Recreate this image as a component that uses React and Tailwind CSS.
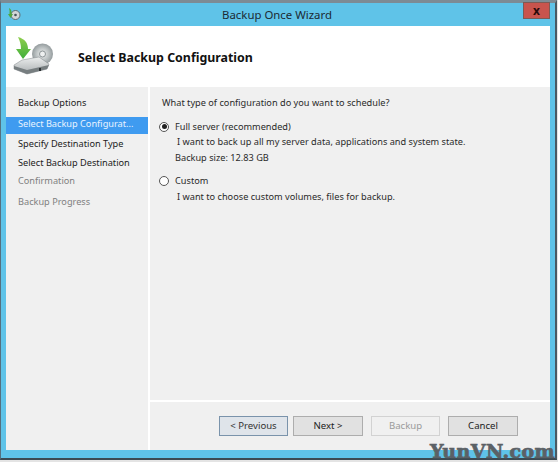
const font = "[font-family:'Noto_Sans',sans-serif]";

const steps = [
  { label: "Backup Options", cls: "h-[20px] text-[#222]" },
  { label: "Select Backup Configurat...", cls: "mt-[4px] h-[17px] pb-[4px] bg-[#3f9bf0] text-[#e8f3ff]" },
  { label: "Specify Destination Type", cls: "h-[20px] text-[#222]" },
  { label: "Select Backup Destination", cls: "h-[18px] text-[#222]" },
  { label: "Confirmation", cls: "h-[18px] text-[#808080]" },
  { label: "Backup Progress", cls: "h-[24px] text-[#808080]" },
];

function WizardIcon() {
  return (
    <svg width="40" height="40" viewBox="0 0 40 40">
      <defs>
        <radialGradient id="disc" cx="0.5" cy="0.5" r="0.5">
          <stop offset="0" stopColor="#f4f4f4" />
          <stop offset="0.6" stopColor="#bcc2c3" />
          <stop offset="1" stopColor="#959c9e" />
        </radialGradient>
        <linearGradient id="drive" x1="0" y1="0" x2="0" y2="1">
          <stop offset="0" stopColor="#eceeee" />
          <stop offset="1" stopColor="#a9aeb0" />
        </linearGradient>
        <linearGradient id="arrow" x1="0" y1="0" x2="0" y2="1">
          <stop offset="0" stopColor="#8fcf4e" />
          <stop offset="1" stopColor="#3fae3a" />
        </linearGradient>
      </defs>
      <circle cx="29.5" cy="18" r="10.5" fill="url(#disc)" />
      <circle cx="29.5" cy="18" r="3" fill="#eef0f0" stroke="#8c9496" />
      <path d="M9 24 L26 21 L36 28 L34 33 L14 38 L1 33 L1 29 Z" fill="url(#drive)" stroke="#80878a" strokeWidth="0.5" />
      <path d="M1 30 L14 34 L36 29 L34 33 L14 38 L1 33 Z" fill="#777e80" />
      <rect x="26" y="32" width="2" height="3" fill="#2c3133" />
      <path d="M5 1 C12 3 15 7 15 13 L18 13 L10 23 L3 13 L8 13 C8 9 7 5 5 1 Z" fill="url(#arrow)" />
    </svg>
  );
}

function TitleIcon() {
  return (
    <svg width="14" height="14" viewBox="0 0 14 14">
      <circle cx="8.5" cy="8" r="4.5" fill="#d3d7d8" stroke="#5d6a70" />
      <circle cx="8.5" cy="8" r="1.3" fill="#46525a" />
      <path d="M2 1 C4 2 5 4 4.5 7 L6 7 L3.5 11 L1 7 L2.5 7 C2.8 5 2.6 3 2 1 Z" fill="#4fa83d" />
    </svg>
  );
}

function Radio({ checked }) {
  return (
    <span className="flex h-[10px] w-[10px] items-center justify-center rounded-full border border-[#555] bg-white">
      {checked && <span className="h-[5px] w-[5px] rounded-full bg-[#222]" />}
    </span>
  );
}

function WizardButton({ children, cls }) {
  return (
    <button type="button" className={`h-[20px] border text-[9.6px] leading-none ${cls}`}>
      {children}
    </button>
  );
}

export default function App() {
  return (
    <div className={`relative h-[462px] w-[558px] overflow-hidden bg-[#e4e4e4] ${font}`}>
      <div className="flex h-[460px] w-[557px] flex-col border-t-[3px] border-r-2 border-b-2 border-l border-t-[#7d8b94] border-r-[#4a5a63] border-b-[#3c4a52] border-l-[#55707f] bg-[#5fc3e8]">
        <div className="relative flex h-[23px] shrink-0 items-center justify-center text-[11.4px] text-[#1c2a33]">
          <span className="absolute left-[6px] top-[4px]">
            <TitleIcon />
          </span>
          <span className="mr-[2px]">Backup Once Wizard</span>
          <span className="absolute -top-px right-[5px] flex h-[17px] w-[27px] items-center justify-center border border-[#7d5a55] bg-[#c9544d] text-[12px] font-bold leading-none text-[#2b0a0a]">
            x
          </span>
        </div>
        <div className="mx-[5px] mb-[8px] flex min-h-0 flex-1 flex-col bg-white">
          <div className="flex h-[61px] shrink-0 items-center">
            <span className="ml-[7px] mt-[-2px]">
              <WizardIcon />
            </span>
            <h1 className="ml-[25px] mt-[4px] text-[12.4px] font-bold text-[#111]">Select Backup Configuration</h1>
          </div>
          <div className="flex min-h-0 flex-1 bg-[#f0f0f0]">
            <nav className="w-[144px] shrink-0 border-r-2 border-white pt-[6px] text-[9.2px]">
              {steps.map((s) => (
                <div key={s.label} className={`flex items-center pl-[12px] ${s.cls}`}>
                  {s.label}
                </div>
              ))}
            </nav>
            <div className="flex min-w-0 flex-1 flex-col">
              <div className="flex-1 pl-[12px] pt-[11px] text-[9.2px] leading-none text-[#2a2a2a]">
                <p className="h-[20px]">What type of configuration do you want to schedule?</p>
                <div className="-ml-[3px] flex h-[17px] items-center gap-[6px]">
                  <Radio checked />
                  <span>Full server (recommended)</span>
                </div>
                <p className="ml-[15px] h-[14px] pt-[2px]">I want to back up all my server data, applications and system state.</p>
                <p className="ml-[13px] mt-[2px] h-[21px] pt-[2px]">Backup size: 12.83 GB</p>
                <div className="-ml-[3px] flex h-[17px] items-center gap-[6px]">
                  <Radio />
                  <span>Custom</span>
                </div>
                <p className="ml-[15px] pt-[3px]">I want to choose custom volumes, files for backup.</p>
              </div>
              <div className="flex h-[50px] shrink-0 items-start gap-[4px] border-t-2 border-white pl-[69px] pt-[14px]">
                <WizardButton cls="w-[69px] border-[#7a93ab] bg-[#dfe4ea] text-[#333]">&lt; Previous</WizardButton>
                <WizardButton cls="ml-[1px] w-[70px] border-[#adadad] bg-[#e1e1e1] text-[#222]">Next &gt;</WizardButton>
                <WizardButton cls="ml-[4px] w-[69px] border-[#d2d2d2] bg-[#f0f0f0] text-[#9a9a9a]">Backup</WizardButton>
                <WizardButton cls="ml-[4px] w-[70px] border-[#adadad] bg-[#e1e1e1] text-[#222]">Cancel</WizardButton>
              </div>
            </div>
          </div>
        </div>
      </div>
      <span className="absolute bottom-[1px] right-[3px] font-['DejaVu_Serif',serif] text-[19px] font-bold leading-none tracking-[0.4px] text-[#5b6166] [-webkit-text-stroke:0.7px_#5b6166]">
        YunVN.com
      </span>
    </div>
  );
}
